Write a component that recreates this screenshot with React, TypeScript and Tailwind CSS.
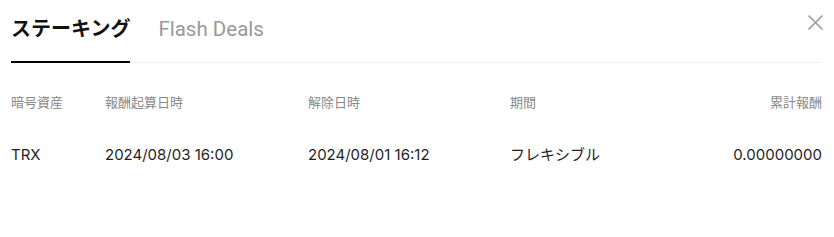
import React from "react";

export default function App() {
  const cols = "grid grid-cols-[94px_203px_202px_1fr]";
  return (
    <div className="relative w-[834px] h-[237px] bg-white px-[11px] pr-[12px] font-['Roboto','Noto_Sans_CJK_JP',sans-serif]">
      <div className="flex items-end gap-[28px] pt-[15px] border-b border-[#eeeeee]">
        <div className="-mb-px pb-[18px] border-b-2 border-black text-[20px] leading-[28px] font-bold text-[#111111]">
          ステーキング
        </div>
        <div className="-mb-px pb-[18px] border-b-2 border-transparent text-[20.5px] leading-[28px] text-[#999999]">
          Flash Deals
        </div>
      </div>
      <button className="absolute right-[11px] top-[15px] w-[15px] h-[15px] text-[#999999]" aria-label="close">
        <svg viewBox="0 0 15 15" width="15" height="15" fill="none" stroke="currentColor" strokeWidth="1.6" strokeLinecap="round">
          <path d="M1 1L14 14M14 1L1 14" />
        </svg>
      </button>
      <div className={`${cols} mt-[30px] text-[13px] leading-[20px] text-[#888888]`}>
        <div>暗号資産</div>
        <div>報酬起算日時</div>
        <div>解除日時</div>
        <div className="flex justify-between">
          <span>期間</span>
          <span>累計報酬</span>
        </div>
      </div>
      <div className={`${cols} mt-[31px] text-[15px] leading-[22px] text-[#1f1f1f] font-['Inter','Noto_Sans_CJK_JP',sans-serif]`}>
        <div>TRX</div>
        <div>2024/08/03 16:00</div>
        <div>2024/08/01 16:12</div>
        <div className="flex justify-between">
          <span>フレキシブル</span>
          <span>0.00000000</span>
        </div>
      </div>
    </div>
  );
}
